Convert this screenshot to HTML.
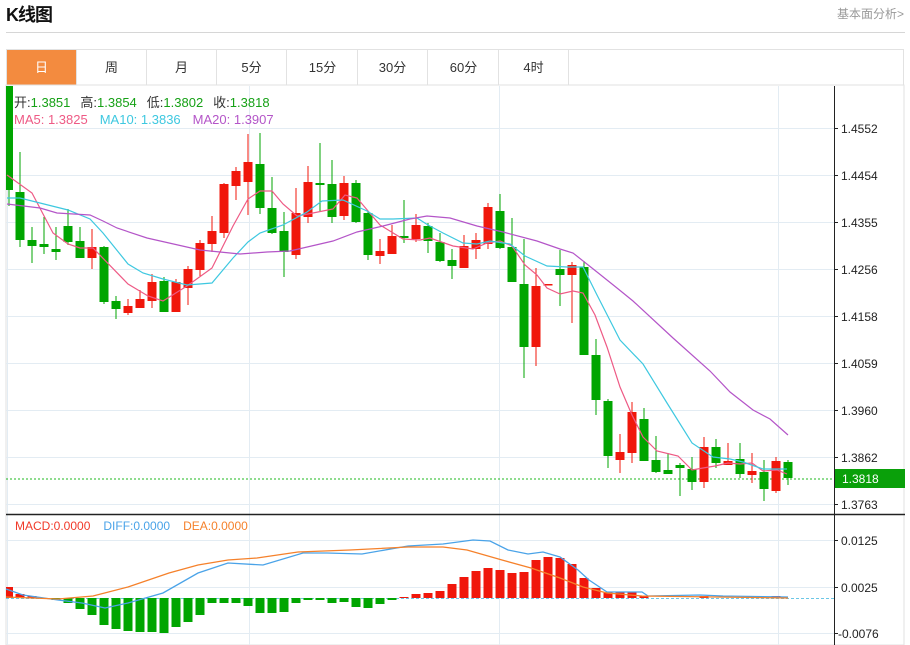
<!DOCTYPE html>
<html><head><meta charset="utf-8"><style>
body{margin:0;width:910px;height:645px;background:#fff;overflow:hidden;font-family:"Liberation Sans","Noto Sans CJK SC",sans-serif;position:relative}
.t{position:absolute;left:6px;top:1px;font-size:18px;font-weight:bold;color:#111;letter-spacing:-1px}
.r{position:absolute;right:6px;top:5px;font-size:12px;color:#999}
.sep{position:absolute;left:6px;top:32px;width:899px;height:1px;background:#d6d6d6}
.tabs{position:absolute;left:6px;top:49px;width:898px;height:36px;border:1px solid #e2e2e2;border-bottom:none;box-sizing:border-box}
.tab{position:absolute;top:0;height:35px;width:70px;border-right:1px solid #e2e2e2;box-sizing:border-box;text-align:center;line-height:35px;font-size:13px;color:#333}
.on{background:#f38b3f;color:#fff}
svg{position:absolute;left:0;top:0}
</style></head><body>
<div class="t">K线图</div>
<div class="r">基本面分析&gt;</div>
<div class="sep"></div>
<div class="tabs">
<div class="tab on" style="left:0">日</div>
<div class="tab" style="left:70px">周</div>
<div class="tab" style="left:140px">月</div>
<div class="tab" style="left:210px">5分</div>
<div class="tab" style="left:281px">15分</div>
<div class="tab" style="left:351px">30分</div>
<div class="tab" style="left:422px">60分</div>
<div class="tab" style="left:492px">4时</div>
</div>
<svg width="910" height="645" viewBox="0 0 910 645" font-family="Liberation Sans, Noto Sans CJK SC, sans-serif">
<rect x="6" y="85" width="898" height="560" fill="none" stroke="#e2e2e2"/>
<g stroke="#e3ecf3" stroke-width="1">
<line x1="6" x2="834" y1="128.5" y2="128.5"/><line x1="6" x2="834" y1="175.5" y2="175.5"/><line x1="6" x2="834" y1="222.5" y2="222.5"/><line x1="6" x2="834" y1="269.5" y2="269.5"/><line x1="6" x2="834" y1="316.5" y2="316.5"/><line x1="6" x2="834" y1="363.5" y2="363.5"/><line x1="6" x2="834" y1="410.5" y2="410.5"/><line x1="6" x2="834" y1="457.5" y2="457.5"/><line x1="6" x2="834" y1="504.5" y2="504.5"/>
<line x1="6" x2="834" y1="540.5" y2="540.5"/><line x1="6" x2="834" y1="587.5" y2="587.5"/><line x1="6" x2="834" y1="633.5" y2="633.5"/>
<line x1="7.5" x2="7.5" y1="86" y2="645"/><line x1="249.5" x2="249.5" y1="86" y2="645"/><line x1="499.5" x2="499.5" y1="86" y2="645"/><line x1="778.5" x2="778.5" y1="86" y2="645"/>
</g>
<line x1="834.5" x2="834.5" y1="86" y2="645" stroke="#222"/>
<line x1="6" x2="905" y1="514.5" y2="514.5" stroke="#222" stroke-width="1.5"/>
<g stroke="#222"><line x1="834" x2="838" y1="128.5" y2="128.5"/><line x1="834" x2="838" y1="175.5" y2="175.5"/><line x1="834" x2="838" y1="222.5" y2="222.5"/><line x1="834" x2="838" y1="269.5" y2="269.5"/><line x1="834" x2="838" y1="316.5" y2="316.5"/><line x1="834" x2="838" y1="363.5" y2="363.5"/><line x1="834" x2="838" y1="410.5" y2="410.5"/><line x1="834" x2="838" y1="457.5" y2="457.5"/><line x1="834" x2="838" y1="504.5" y2="504.5"/><line x1="834" x2="838" y1="540.5" y2="540.5"/><line x1="834" x2="838" y1="587.5" y2="587.5"/><line x1="834" x2="838" y1="633.5" y2="633.5"/></g>
<g font-size="12" fill="#222">
<text x="841" y="133">1.4552</text><text x="841" y="180">1.4454</text><text x="841" y="227">1.4355</text><text x="841" y="274">1.4256</text><text x="841" y="321">1.4158</text><text x="841" y="368">1.4059</text><text x="841" y="415">1.3960</text><text x="841" y="462">1.3862</text><text x="841" y="509">1.3763</text>
<text x="841" y="545">0.0125</text><text x="841" y="592">0.0025</text><text x="838" y="638">-0.0076</text>
</g>
<line x1="6" x2="834" y1="479" y2="479" stroke="#1fb81f" stroke-dasharray="2,2"/>
<rect x="835" y="469" width="70" height="19" fill="#0aa00a"/>
<text x="842" y="483" font-size="12" fill="#fff">1.3818</text>

<g fill="#00a500" stroke="#00a500">
<line x1="9" x2="9" y1="86" y2="206"/><rect x="6" y="86" width="7" height="104" stroke="none"/>
<line x1="20" x2="20" y1="152" y2="247"/><rect x="15.5" y="192" width="9" height="48" stroke="none"/>
<line x1="32" x2="32" y1="227" y2="263"/><rect x="27.5" y="240" width="9" height="6" stroke="none"/>
<line x1="44" x2="44" y1="217" y2="254"/><rect x="39.5" y="244" width="9" height="3" stroke="none"/>
<line x1="56" x2="56" y1="227" y2="260"/><rect x="51.5" y="249" width="9" height="3" stroke="none"/>
<line x1="68" x2="68" y1="209" y2="245"/><rect x="63.5" y="226" width="9" height="16" stroke="none"/>
<line x1="80" x2="80" y1="227" y2="258"/><rect x="75.5" y="241" width="9" height="17" stroke="none"/>
<line x1="104" x2="104" y1="246" y2="304"/><rect x="99.5" y="247" width="9" height="55" stroke="none"/>
<line x1="116" x2="116" y1="296" y2="319"/><rect x="111.5" y="301" width="9" height="8" stroke="none"/>
<line x1="164" x2="164" y1="277" y2="312"/><rect x="159.5" y="281" width="9" height="31" stroke="none"/>
<line x1="260" x2="260" y1="133" y2="214"/><rect x="255.5" y="164" width="9" height="44" stroke="none"/>
<line x1="272" x2="272" y1="177" y2="234"/><rect x="267.5" y="208" width="9" height="25" stroke="none"/>
<line x1="284" x2="284" y1="212" y2="277"/><rect x="279.5" y="231" width="9" height="21" stroke="none"/>
<line x1="320" x2="320" y1="143" y2="211"/><rect x="315.5" y="183" width="9" height="2" stroke="none"/>
<line x1="332" x2="332" y1="160" y2="223"/><rect x="327.5" y="184" width="9" height="33" stroke="none"/>
<line x1="356" x2="356" y1="180" y2="223"/><rect x="351.5" y="183" width="9" height="39" stroke="none"/>
<line x1="368" x2="368" y1="212" y2="260"/><rect x="363.5" y="213" width="9" height="42" stroke="none"/>
<line x1="404" x2="404" y1="200" y2="243"/><rect x="399.5" y="236" width="9" height="2" stroke="none"/>
<line x1="428" x2="428" y1="223" y2="253"/><rect x="423.5" y="226" width="9" height="15" stroke="none"/>
<line x1="440" x2="440" y1="233" y2="262"/><rect x="435.5" y="242" width="9" height="19" stroke="none"/>
<line x1="452" x2="452" y1="249" y2="279"/><rect x="447.5" y="260" width="9" height="6" stroke="none"/>
<line x1="500" x2="500" y1="194" y2="249"/><rect x="495.5" y="211" width="9" height="37" stroke="none"/>
<line x1="512" x2="512" y1="218" y2="282"/><rect x="507.5" y="247" width="9" height="35" stroke="none"/>
<line x1="524" x2="524" y1="239" y2="378"/><rect x="519.5" y="284" width="9" height="63" stroke="none"/>
<line x1="560" x2="560" y1="250" y2="306"/><rect x="555.5" y="269" width="9" height="6" stroke="none"/>
<line x1="584" x2="584" y1="261" y2="355"/><rect x="579.5" y="267" width="9" height="88" stroke="none"/>
<line x1="596" x2="596" y1="339" y2="415"/><rect x="591.5" y="355" width="9" height="45" stroke="none"/>
<line x1="608" x2="608" y1="399" y2="468"/><rect x="603.5" y="401" width="9" height="55" stroke="none"/>
<line x1="644" x2="644" y1="408" y2="461"/><rect x="639.5" y="419" width="9" height="42" stroke="none"/>
<line x1="656" x2="656" y1="436" y2="473"/><rect x="651.5" y="460" width="9" height="12" stroke="none"/>
<line x1="668" x2="668" y1="453" y2="474"/><rect x="663.5" y="470" width="9" height="4" stroke="none"/>
<line x1="680" x2="680" y1="463" y2="496"/><rect x="675.5" y="465" width="9" height="3" stroke="none"/>
<line x1="692" x2="692" y1="457" y2="490"/><rect x="687.5" y="469" width="9" height="13" stroke="none"/>
<line x1="716" x2="716" y1="439" y2="468"/><rect x="711.5" y="447" width="9" height="16" stroke="none"/>
<line x1="740" x2="740" y1="443" y2="478"/><rect x="735.5" y="459" width="9" height="15" stroke="none"/>
<line x1="764" x2="764" y1="460" y2="501"/><rect x="759.5" y="472" width="9" height="17" stroke="none"/>
<line x1="788" x2="788" y1="460" y2="485"/><rect x="783.5" y="462" width="9" height="16" stroke="none"/>
</g>
<g fill="#f0170b" stroke="#f0170b">
<line x1="92" x2="92" y1="229" y2="269"/><rect x="87.5" y="247" width="9" height="11" stroke="none"/>
<line x1="128" x2="128" y1="299" y2="315"/><rect x="123.5" y="306" width="9" height="7" stroke="none"/>
<line x1="140" x2="140" y1="290" y2="308"/><rect x="135.5" y="299" width="9" height="9" stroke="none"/>
<line x1="152" x2="152" y1="274" y2="308"/><rect x="147.5" y="282" width="9" height="19" stroke="none"/>
<line x1="176" x2="176" y1="279" y2="312"/><rect x="171.5" y="282" width="9" height="30" stroke="none"/>
<line x1="188" x2="188" y1="266" y2="305"/><rect x="183.5" y="269" width="9" height="19" stroke="none"/>
<line x1="200" x2="200" y1="240" y2="276"/><rect x="195.5" y="243" width="9" height="27" stroke="none"/>
<line x1="212" x2="212" y1="216" y2="252"/><rect x="207.5" y="231" width="9" height="13" stroke="none"/>
<line x1="224" x2="224" y1="183" y2="238"/><rect x="219.5" y="184" width="9" height="49" stroke="none"/>
<line x1="236" x2="236" y1="167" y2="200"/><rect x="231.5" y="171" width="9" height="15" stroke="none"/>
<line x1="248" x2="248" y1="134" y2="215"/><rect x="243.5" y="162" width="9" height="20" stroke="none"/>
<line x1="296" x2="296" y1="188" y2="259"/><rect x="291.5" y="213" width="9" height="42" stroke="none"/>
<line x1="308" x2="308" y1="166" y2="223"/><rect x="303.5" y="182" width="9" height="35" stroke="none"/>
<line x1="344" x2="344" y1="176" y2="220"/><rect x="339.5" y="183" width="9" height="33" stroke="none"/>
<line x1="380" x2="380" y1="239" y2="264"/><rect x="375.5" y="251" width="9" height="5" stroke="none"/>
<line x1="392" x2="392" y1="225" y2="254"/><rect x="387.5" y="236" width="9" height="18" stroke="none"/>
<line x1="416" x2="416" y1="214" y2="242"/><rect x="411.5" y="225" width="9" height="14" stroke="none"/>
<line x1="464" x2="464" y1="235" y2="268"/><rect x="459.5" y="246" width="9" height="22" stroke="none"/>
<line x1="476" x2="476" y1="233" y2="259"/><rect x="471.5" y="240" width="9" height="9" stroke="none"/>
<line x1="488" x2="488" y1="203" y2="249"/><rect x="483.5" y="207" width="9" height="37" stroke="none"/>
<line x1="536" x2="536" y1="268" y2="366"/><rect x="531.5" y="286" width="9" height="61" stroke="none"/>
<rect x="543.5" y="284" width="9" height="1.5" stroke="none"/>
<line x1="572" x2="572" y1="262" y2="323"/><rect x="567.5" y="265" width="9" height="10" stroke="none"/>
<line x1="620" x2="620" y1="434" y2="473"/><rect x="615.5" y="452" width="9" height="8" stroke="none"/>
<line x1="632" x2="632" y1="402" y2="463"/><rect x="627.5" y="412" width="9" height="41" stroke="none"/>
<line x1="704" x2="704" y1="437" y2="488"/><rect x="699.5" y="447" width="9" height="35" stroke="none"/>
<line x1="728" x2="728" y1="443" y2="465"/><rect x="723.5" y="461" width="9" height="4" stroke="none"/>
<line x1="752" x2="752" y1="453" y2="483"/><rect x="747.5" y="471" width="9" height="4" stroke="none"/>
<line x1="776" x2="776" y1="457" y2="493"/><rect x="771.5" y="461" width="9" height="30" stroke="none"/>
</g>
<g fill="none" stroke-width="1.2">
<polyline stroke="#ee5a85" points="7,175 32,193 53,233 68,244 80,248 93,248 128,284 148,296 163,301 187,286 212,268 233,226 248,199 260,191 272,191 283,204 297,216 308,214 333,209 345,195 357,198 380,225 403,239 420,240 430,238 453,246 473,249 487,243 500,241 512,246 525,265 537,275 547,288 560,294 573,291 583,293 595,315 607,347 620,387 632,415 643,437 657,451 678,456 692,470 703,468 715,466 728,463 740,464 752,463 763,471 777,470 787,474"/>
<polyline stroke="#3ec8e0" points="7,198 20,198 40,203 68,210 90,219 103,233 128,264 143,273 163,279 187,285 212,283 233,258 248,242 260,233 283,225 307,212 322,201 343,200 367,211 380,219 393,219 417,218 428,225 443,233 463,243 477,244 490,241 510,244 525,256 547,266 567,267 583,267 597,295 620,340 643,364 667,403 692,443 713,457 730,459 743,462 763,469 787,469"/>
<polyline stroke="#b455c8" points="7,204 40,208 57,213 90,215 103,221 117,228 147,238 200,250 240,254 267,252 290,251 333,241 357,232 383,226 410,219 427,216 450,218 477,226 503,232 537,241 560,249 573,253 597,272 617,288 633,301 673,338 710,371 730,392 753,410 770,419 788,435"/>
</g>
<g font-size="13">
<text x="14" y="107"><tspan fill="#333">开:</tspan><tspan fill="#16a116">1.3851</tspan><tspan fill="#333" dx="10">高:</tspan><tspan fill="#16a116">1.3854</tspan><tspan fill="#333" dx="10">低:</tspan><tspan fill="#16a116">1.3802</tspan><tspan fill="#333" dx="10">收:</tspan><tspan fill="#16a116">1.3818</tspan></text>
<text x="14" y="124"><tspan fill="#ee5a85">MA5: 1.3825</tspan><tspan fill="#3ec8e0" dx="12">MA10: 1.3836</tspan><tspan fill="#b455c8" dx="12">MA20: 1.3907</tspan></text>
</g>
<g font-size="12">
<text x="15" y="530"><tspan fill="#f03a2a">MACD:0.0000</tspan><tspan fill="#4aa3e8" dx="13">DIFF:0.0000</tspan><tspan fill="#f5812b" dx="13">DEA:0.0000</tspan></text>
</g>
<line x1="6" x2="834" y1="598.5" y2="598.5" stroke="#6cc7e6" stroke-dasharray="3,2"/>
<g fill="#f0170b">
<rect x="6" y="587" width="7" height="11"/><rect x="15.5" y="594" width="9" height="4"/><rect x="27.5" y="596" width="9" height="2"/>
<rect x="399.5" y="597" width="9" height="1"/><rect x="411.5" y="594" width="9" height="4"/><rect x="423.5" y="593" width="9" height="5"/><rect x="435.5" y="591" width="9" height="7"/><rect x="447.5" y="584" width="9" height="14"/><rect x="459.5" y="577" width="9" height="21"/><rect x="471.5" y="571" width="9" height="27"/><rect x="483.5" y="568" width="9" height="30"/><rect x="495.5" y="570" width="9" height="28"/><rect x="507.5" y="573" width="9" height="25"/><rect x="519.5" y="572" width="9" height="26"/><rect x="531.5" y="560" width="9" height="38"/><rect x="543.5" y="557" width="9" height="41"/><rect x="555.5" y="558" width="9" height="40"/><rect x="567.5" y="564" width="9" height="34"/><rect x="579.5" y="578" width="9" height="20"/><rect x="591.5" y="588" width="9" height="10"/><rect x="603.5" y="592" width="9" height="6"/><rect x="615.5" y="592" width="9" height="6"/><rect x="627.5" y="592" width="9" height="6"/><rect x="639.5" y="596" width="9" height="2"/>
<rect x="699.5" y="596" width="9" height="2"/><rect x="771.5" y="596" width="9" height="2"/>
</g>
<g fill="#00a500">
<rect x="51.5" y="598" width="9" height="2"/><rect x="63.5" y="598" width="9" height="5"/><rect x="75.5" y="598" width="9" height="11"/><rect x="87.5" y="598" width="9" height="17"/><rect x="99.5" y="598" width="9" height="27"/><rect x="111.5" y="598" width="9" height="31"/><rect x="123.5" y="598" width="9" height="33"/><rect x="135.5" y="598" width="9" height="34"/><rect x="147.5" y="598" width="9" height="34"/><rect x="159.5" y="598" width="9" height="35"/><rect x="171.5" y="598" width="9" height="29"/><rect x="183.5" y="598" width="9" height="24"/><rect x="195.5" y="598" width="9" height="17"/><rect x="207.5" y="598" width="9" height="5"/><rect x="219.5" y="598" width="9" height="5"/><rect x="231.5" y="598" width="9" height="5"/><rect x="243.5" y="598" width="9" height="8"/><rect x="255.5" y="598" width="9" height="15"/><rect x="267.5" y="598" width="9" height="15"/><rect x="279.5" y="598" width="9" height="14"/><rect x="291.5" y="598" width="9" height="5"/><rect x="303.5" y="598" width="9" height="2"/><rect x="315.5" y="598" width="9" height="2"/><rect x="327.5" y="598" width="9" height="5"/><rect x="339.5" y="598" width="9" height="4"/><rect x="351.5" y="598" width="9" height="9"/><rect x="363.5" y="598" width="9" height="10"/><rect x="375.5" y="598" width="9" height="6"/><rect x="387.5" y="598" width="9" height="2"/>
</g>
<g fill="none" stroke-width="1.3">
<polyline stroke="#4aa3e8" points="6,589 23,595 58,600 82,603 105,608 128,603 163,593 198,573 228,563 263,565 303,553 327,553 362,554 408,546 443,544 473,540 490,541 508,550 528,554 543,552 560,557 578,570 589,580 607,592 642,592 648,596 700,595 723,596 788,597"/>
<polyline stroke="#f5812b" points="6,597 58,599 93,596 128,587 169,573 198,565 228,560 257,558 298,552 350,550 408,547 443,547 467,550 502,560 531,568 560,578 583,587 607,593 642,596 788,598"/>
</g>
</svg>
</body></html>
